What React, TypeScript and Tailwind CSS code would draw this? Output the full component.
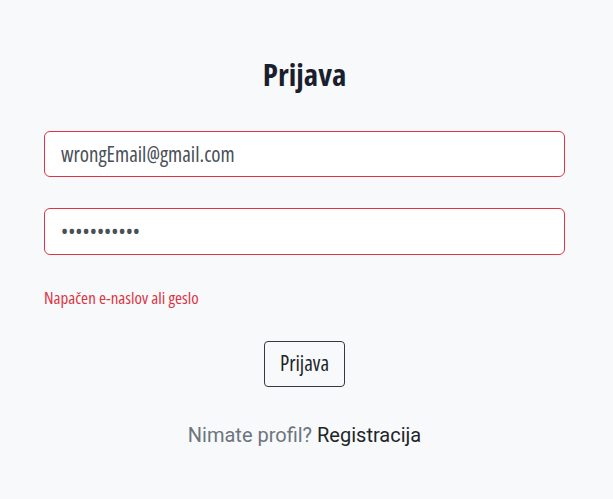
export default function App() {
  return (
    <div
      className="min-h-[499px] bg-[#f8f9fa] pl-[44px] pr-[48px] pt-[52px] [font-stretch:75%]"
      style={{ fontFamily: '"Open Sans", "DejaVu Sans", sans-serif' }}
    >
      <h1 className="text-center text-[31px] font-bold leading-[44px] text-[#1b1e2e]">Prijava</h1>
      <form className="mt-[35px] flex flex-col">
        <input
          type="email"
          defaultValue="wrongEmail@gmail.com"
          className="h-[46px] w-full rounded-[6px] border border-[#dc3545] bg-white px-4 text-[21px] text-[#495057] outline-none"
        />
        <input
          type="password"
          defaultValue="password123"
          className="mt-[31px] h-[47px] w-full rounded-[6px] border border-[#dc3545] bg-white px-4 text-[19px] text-[#495057] outline-none"
        />
        <p className="mt-[33px] text-[17px] leading-5 text-[#dc3545]">Napačen e-naslov ali geslo</p>
        <div className="mt-[33px] flex justify-center">
          <button
            type="button"
            className="h-[46px] rounded-[4px] border border-[#343a40] px-[15px] text-[21px] text-[#212529]"
          >
            Prijava
          </button>
        </div>
        <p
          className="mt-[33px] text-center text-[20px] text-[#6c757d] [font-stretch:100%]"
          style={{ fontFamily: 'Roboto, sans-serif' }}
        >
          Nimate profil? <span className="text-[#212529]">Registracija</span>
        </p>
      </form>
    </div>
  );
}
